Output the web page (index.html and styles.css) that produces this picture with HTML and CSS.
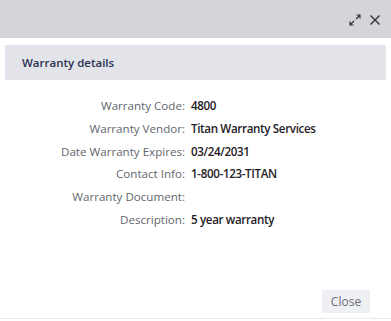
FILE: index.html
```html
<!DOCTYPE html>
<html>
<head>
<meta charset="utf-8">
<link rel="stylesheet" href="styles.css">
</head>
<body>
<div class="dialog">
  <div class="titlebar">
    <span class="icon expand">
      <svg width="12" height="12" viewBox="0 0 12 12" fill="none" stroke="#333" stroke-width="1.2">
        <path d="M7 5 L11 1 M7.5 1 H11 V4.5"/>
        <path d="M5 7 L1 11 M1 7.5 V11 H4.5"/>
      </svg>
    </span>
    <span class="icon close">
      <svg width="12" height="12" viewBox="0 0 12 12" fill="none" stroke="#333" stroke-width="1.4">
        <path d="M1.5 1.5 L10.5 10.5 M10.5 1.5 L1.5 10.5"/>
      </svg>
    </span>
  </div>
  <div class="content">
    <div class="section-header">Warranty details</div>
    <div class="fields">
      <div class="label">Warranty Code:</div><div class="value">4800</div>
      <div class="label">Warranty Vendor:</div><div class="value">Titan Warranty Services</div>
      <div class="label">Date Warranty Expires:</div><div class="value">03/24/2031</div>
      <div class="label">Contact Info:</div><div class="value">1-800-123-TITAN</div>
      <div class="label">Warranty Document:</div><div class="value"></div>
      <div class="label">Description:</div><div class="value">5 year warranty</div>
    </div>
    <div class="footer">
      <button class="btn">Close</button>
    </div>
  </div>
</div>
</body>
</html>
```
FILE: styles.css
```css
html, body {
  margin: 0;
  padding: 0;
  background: #ffffff;
}
body {
  font-family: "Open Sans", "Liberation Sans", sans-serif;
  width: 391px;
  height: 321px;
  overflow: hidden;
}
.dialog {
  width: 391px;
  height: 318px;
  border-bottom: 1px solid #e6ebf0;
  display: flex;
  flex-direction: column;
}
.titlebar {
  height: 38px;
  background: #d3d5d9;
  display: flex;
  justify-content: flex-end;
  align-items: center;
  gap: 8px;
  padding-right: 10px;
  padding-top: 1px;
  box-sizing: border-box;
}
.icon {
  display: flex;
  width: 12px;
  height: 12px;
}
.content {
  flex: 1;
  display: flex;
  flex-direction: column;
  padding: 7px 5px 5px 5px;
}
.section-header {
  height: 35px;
  background: #e2e4e9;
  color: #2a3150;
  font-size: 11.5px;
  font-weight: 600;
  display: flex;
  align-items: center;
  padding-left: 17px;
}
.fields {
  display: grid;
  grid-template-columns: 180px auto;
  column-gap: 6px;
  row-gap: 0;
  margin-top: 15px;
  font-size: 11.6px;
}
.label {
  text-align: right;
  color: #62666c;
  line-height: 22.8px;
}
.value {
  color: #1f2126;
  line-height: 22.8px;
  min-height: 22.8px;
  font-weight: 600;
  letter-spacing: -0.35px;
}
.footer {
  margin-top: auto;
  display: flex;
  justify-content: flex-end;
  padding-right: 16px;
}
.btn {
  font-family: "Open Sans", "Liberation Sans", sans-serif;
  font-size: 12px;
  color: #6a6e75;
  background: #eef0f3;
  border: none;
  width: 48px;
  height: 23px;
  padding: 0;
}
```
